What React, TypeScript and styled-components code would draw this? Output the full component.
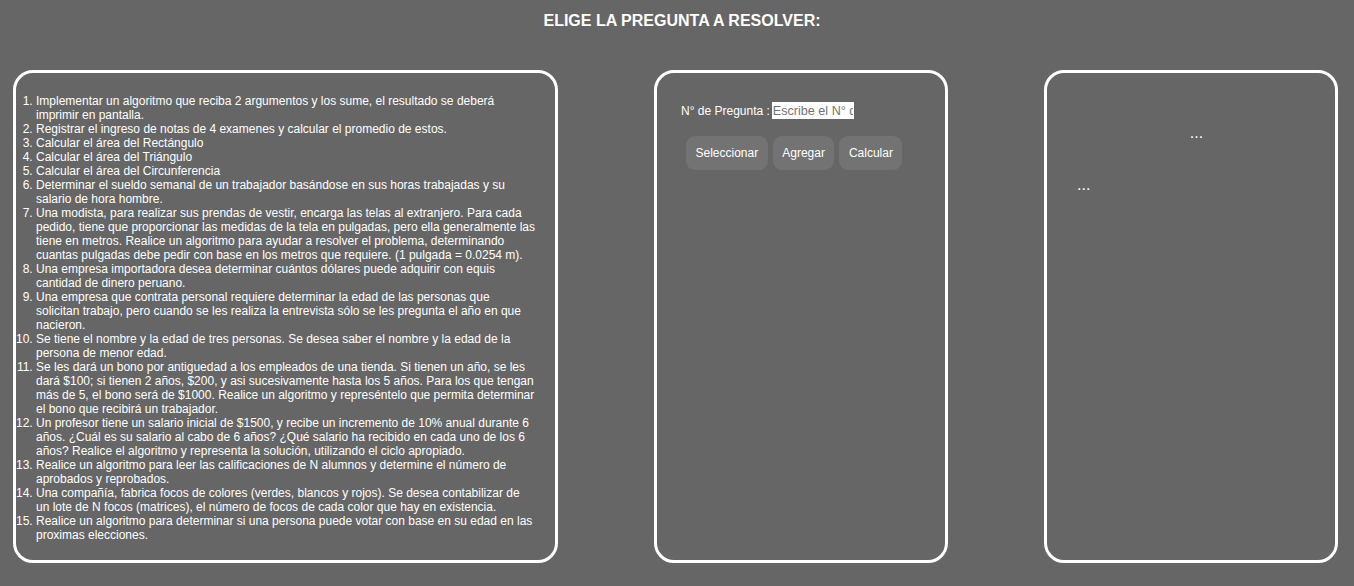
import React from "react";
import styled, { createGlobalStyle } from "styled-components";

const Global = createGlobalStyle`
  html, body {
    margin: 0;
    padding: 0;
    background: #666666;
  }
  body {
    font-family: "Liberation Sans", Arial, sans-serif;
    color: #ffffff;
  }
`;

const Page = styled.div`
  width: 1354px;
  height: 586px;
  box-sizing: border-box;
  background: #666666;
  display: flex;
  flex-direction: column;
`;

const Title = styled.h1`
  margin: 0;
  padding: 12px 0 0 10px;
  height: 59px;
  box-sizing: border-box;
  text-align: center;
  font-size: 16px;
  line-height: 18px;
  font-weight: bold;
  color: #ffffff;
`;

const Row = styled.div`
  display: flex;
  gap: 96px;
  padding-left: 13px;
  padding-top: 11px;
`;

const Panel = styled.section<{ $w: number }>`
  width: ${(p) => p.$w}px;
  height: 493px;
  box-sizing: border-box;
  border: 3px solid #ffffff;
  border-radius: 20px;
  flex: none;
`;

const QuestionPanel = styled(Panel)`
  padding: 21px 19px 0 0;
`;

const List = styled.ol`
  margin: 0;
  padding-left: 20px;
  font-size: 12px;
  line-height: 14px;
  color: #ffffff;
`;

const FormPanel = styled(Panel)`
  padding: 29px 0 0 24px;
`;

const FieldRow = styled.div`
  display: flex;
  align-items: center;
  font-size: 12px;
`;

const Label = styled.label`
  margin-right: 2px;
  color: #ffffff;
`;

const Input = styled.input`
  width: 82px;
  height: 17px;
  box-sizing: border-box;
  border: none;
  padding: 0 1px;
  font-family: "Liberation Sans", Arial, sans-serif;
  font-size: 12.6px;
  background: #ffffff;
  color: #222;
  &::placeholder {
    color: #757575;
  }
`;

const Buttons = styled.div`
  display: flex;
  gap: 5px;
  margin-top: 17px;
  margin-left: 5px;
`;

const Btn = styled.button`
  height: 34px;
  padding: 0 9.5px;
  border: none;
  border-radius: 9px;
  background: #737373;
  color: #ffffff;
  font-family: "Liberation Sans", Arial, sans-serif;
  font-size: 12px;
`;

const ResultPanel = styled(Panel)`
  display: flex;
  flex-direction: column;
  padding-top: 51px;
`;

const Dots = styled.div<{ $center?: boolean }>`
  font-size: 16px;
  color: #ffffff;
  line-height: 18px;
  text-align: ${(p) => (p.$center ? "center" : "left")};
  padding-left: ${(p) => (p.$center ? "11px" : "30px")};
  margin-bottom: ${(p) => (p.$center ? "34px" : "0")};
`;

const questions = [
  "Implementar un algoritmo que reciba 2 argumentos y los sume, el resultado se deberá imprimir en pantalla.",
  "Registrar el ingreso de notas de 4 examenes y calcular el promedio de estos.",
  "Calcular el área del Rectángulo",
  "Calcular el área del Triángulo",
  "Calcular el área del Circunferencia",
  "Determinar el sueldo semanal de un trabajador basándose en sus horas trabajadas y su salario de hora hombre.",
  "Una modista, para realizar sus prendas de vestir, encarga las telas al extranjero. Para cada pedido, tiene que proporcionar las medidas de la tela en pulgadas, pero ella generalmente las tiene en metros. Realice un algoritmo para ayudar a resolver el problema, determinando cuantas pulgadas debe pedir con base en los metros que requiere. (1 pulgada = 0.0254 m).",
  "Una empresa importadora desea determinar cuántos dólares puede adquirir con equis cantidad de dinero peruano.",
  "Una empresa que contrata personal requiere determinar la edad de las personas que solicitan trabajo, pero cuando se les realiza la entrevista sólo se les pregunta el año en que nacieron.",
  "Se tiene el nombre y la edad de tres personas. Se desea saber el nombre y la edad de la persona de menor edad.",
  "Se les dará un bono por antiguedad a los empleados de una tienda. Si tienen un año, se les dará $100; si tienen 2 años, $200, y asi sucesivamente hasta los 5 años. Para los que tengan más de 5, el bono será de $1000. Realice un algoritmo y represéntelo que permita determinar el bono que recibirá un trabajador.",
  "Un profesor tiene un salario inicial de $1500, y recibe un incremento de 10% anual durante 6 años. ¿Cuál es su salario al cabo de 6 años? ¿Qué salario ha recibido en cada uno de los 6 años? Realice el algoritmo y representa la solución, utilizando el ciclo apropiado.",
  "Realice un algoritmo para leer las calificaciones de N alumnos y determine el número de aprobados y reprobados.",
  "Una compañía, fabrica focos de colores (verdes, blancos y rojos). Se desea contabilizar de un lote de N focos (matrices), el número de focos de cada color que hay en existencia.",
  "Realice un algoritmo para determinar si una persona puede votar con base en su edad en las proximas elecciones.",
];

export default function App() {
  return (
    <Page>
      <Global />
      <Title>ELIGE LA PREGUNTA A RESOLVER:</Title>
      <Row>
        <QuestionPanel $w={545}>
          <List>
            {questions.map((q, i) => (
              <li key={i}>{q}</li>
            ))}
          </List>
        </QuestionPanel>
        <FormPanel $w={294}>
          <FieldRow>
            <Label htmlFor="np">N° de Pregunta :</Label>
            <Input id="np" placeholder="Escribe el N° de pregunta" />
          </FieldRow>
          <Buttons>
            <Btn>Seleccionar</Btn>
            <Btn>Agregar</Btn>
            <Btn>Calcular</Btn>
          </Buttons>
        </FormPanel>
        <ResultPanel $w={294}>
          <Dots $center>...</Dots>
          <Dots>...</Dots>
        </ResultPanel>
      </Row>
    </Page>
  );
}
